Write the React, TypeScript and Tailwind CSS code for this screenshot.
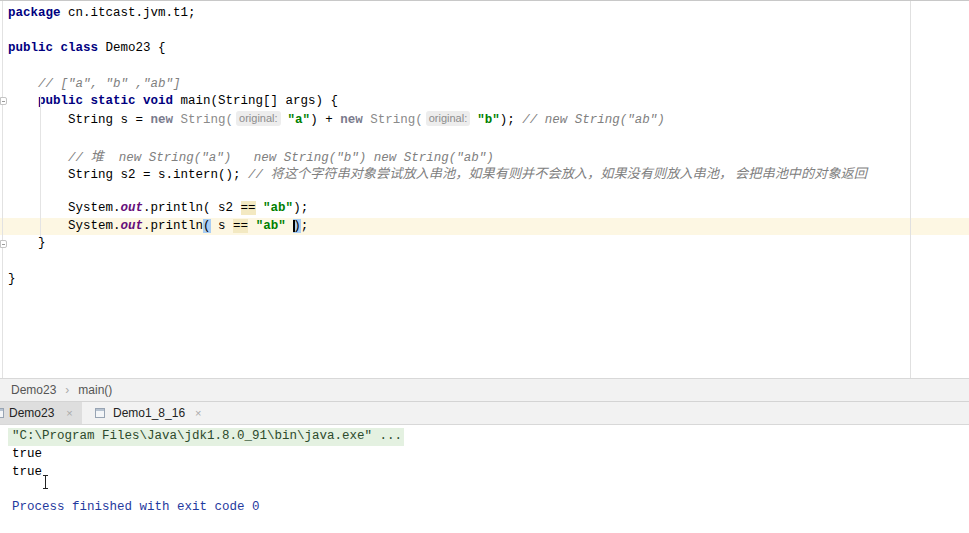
import React from "react";

const MONO = '"Liberation Mono", "DejaVu Sans Mono", monospace';
const CJK = '"Noto Sans CJK SC", sans-serif';

const K = ({ children }: { children: React.ReactNode }) => (
  <span className="font-bold text-[#000080]">{children}</span>
);
const S = ({ children }: { children: React.ReactNode }) => (
  <span className="font-bold text-[#008000]">{children}</span>
);
const C = ({ children }: { children: React.ReactNode }) => (
  <span className="italic text-[#808080]">{children}</span>
);
const Dim = ({ children, bold }: { children: React.ReactNode; bold?: boolean }) => (
  <span className={bold ? "font-bold text-[#7a7a8c]" : "text-[#8a8a8a]"}>{children}</span>
);
const Out = () => <span className="italic font-bold text-[#660e7a]">out</span>;
const Eq = () => <span className="bg-[#f3e9c2]">==</span>;
const Inlay = () => (
  <span
    className="inline-block ml-[3px] mr-[7px] px-[3px] rounded-[3px] bg-[#ededed] text-[#8c8c8c] text-[11px] leading-[15px] align-[1px]"
    style={{ fontFamily: '"Liberation Sans", Arial, sans-serif' }}
  >
    original:
  </span>
);
const Cn = ({ children }: { children: React.ReactNode }) => (
  <span className="text-[13.2px]" style={{ fontFamily: CJK }}>
    {children}
  </span>
);

const Line = ({ children, current }: { children?: React.ReactNode; current?: boolean }) => (
  <div className={"h-[17.75px] leading-[17.75px] whitespace-pre pl-[8px] " + (current ? "bg-[#fdf7e3]" : "")}>
    {children}
  </div>
);

const TabIcon = () => (
  <svg width="10" height="10" viewBox="0 0 10 10" className="shrink-0">
    <rect x="0.5" y="0.5" width="9" height="9" fill="#f4f6f8" stroke="#98a4b3" />
    <rect x="1" y="1" width="8" height="2" fill="#b7c3d1" />
  </svg>
);

export default function App() {
  return (
    <div className="w-[969px] h-[533px] flex flex-col bg-white overflow-hidden" style={{ fontFamily: MONO }}>
      {/* Editor */}
      <div className="relative h-[378px] border-t border-[#c8c8c8] text-[12.5px] text-black overflow-hidden">
        {/* gutter line */}
        <div className="absolute left-[2px] top-0 bottom-0 w-px bg-[#e2e2e2]" />
        {/* right margin */}
        <div className="absolute left-[910px] top-0 bottom-0 w-px bg-[#e0e0e0] z-10" />
        <div className="pt-[3.5px]">
          <Line>
            <K>package</K> cn.itcast.jvm.t1;
          </Line>
          <Line />
          <Line>
            <K>public class</K> Demo23 {"{"}
          </Line>
          <Line />
          <Line>
            {"    "}
            <C>// ["a", "b" ,"ab"]</C>
          </Line>
          <Line>
            {"    "}
            <K>public static void</K> main(String[] args) {"{"}
          </Line>
          <Line>
            {"        String s = "}
            <Dim bold>new</Dim> <Dim>String(</Dim>
            <Inlay />
            <S>"a"</S>) + <Dim bold>new</Dim> <Dim>String(</Dim>
            <Inlay />
            <S>"b"</S>); <C>// new String("ab")</C>
          </Line>
          <Line />
          <Line>
            {"        "}
            <C>
              // <Cn>堆</Cn>  new String("a")   new String("b") new String("ab")
            </C>
          </Line>
          <Line>
            {"        String s2 = s.intern(); "}
            <C>
              // <Cn>将这个字符串对象尝试放入串池，如果有则并不会放入，如果没有则放入串池， 会把串池中的对象返回</Cn>
            </C>
          </Line>
          <Line />
          <Line>
            {"        System."}
            <Out />
            .println( s2 <Eq /> <S>"ab"</S>);
          </Line>
          <Line current>
            {"        System."}
            <Out />
            .println<span className="bg-[#a9cdf3]">(</span> s <Eq /> <S>"ab"</S>{" "}
            <span className="relative bg-[#a9cdf3]">
              <span className="absolute left-0 top-[1px] bottom-[1px] w-[2px] bg-black" />)
            </span>
            ;
          </Line>
          <Line>{"    }"}</Line>
          <Line />
          <Line>{"}"}</Line>
        </div>
        {/* indent guide */}
        <div className="absolute left-[40px] top-[94px] h-[142px] w-px bg-[#e4e4e4]" />
        {/* fold markers */}
        <div className="absolute left-[0px] top-[96px] w-[7px] h-[8px] border border-[#c4c4c4] bg-white rounded-r-[2px] flex items-center justify-center">
          <div className="w-[3px] h-px bg-[#9a9a9a]" />
        </div>
        <div className="absolute left-[0px] top-[239px] w-[7px] h-[8px] border border-[#c4c4c4] bg-white rounded-r-[2px] flex items-center justify-center">
          <div className="w-[3px] h-px bg-[#9a9a9a]" />
        </div>
      </div>

      {/* Breadcrumb */}
      <div
        className="h-[23px] shrink-0 border-t border-[#d8d8d8] bg-[#f2f2f2] flex items-center pl-[11px] text-[12px] text-[#555]"
        style={{ fontFamily: '"Liberation Sans", Arial, sans-serif' }}
      >
        <span>Demo23</span>
        <span className="mx-[9px] text-[#aaa]">›</span>
        <span>main()</span>
      </div>

      {/* Tabs */}
      <div
        className="h-[23px] shrink-0 border-t border-[#d4d4d4] bg-[#f2f2f2] flex items-stretch text-[12px] text-[#222]"
        style={{ fontFamily: '"Liberation Sans", Arial, sans-serif' }}
      >
        <div className="w-[82px] bg-[#dedede] flex items-center gap-[4px] pl-0">
          <div className="-ml-[6px]">
            <TabIcon />
          </div>
          <span className="ml-[1px]">Demo23</span>
          <span className="ml-[8px] text-[#aaa] text-[11px]">×</span>
        </div>
        <div className="flex items-center pl-[13px]">
          <TabIcon />
          <span className="ml-[8px]">Demo1_8_16</span>
          <span className="ml-[10px] text-[#aaa] text-[11px]">×</span>
        </div>
      </div>

      {/* Console */}
      <div className="relative flex-1 border-t border-[#d8d8d8] bg-white text-[12.5px] pt-[3px]">
        <div className="h-[17.75px] leading-[17.75px] whitespace-pre pl-[8px]">
          <span className="inline-block bg-[#e4f1e1] pl-[4px] pr-[2px] text-[#2c4a2c]">
            "C:\Program Files\Java\jdk1.8.0_91\bin\java.exe" ...
          </span>
        </div>
        <div className="h-[17.75px] leading-[17.75px] whitespace-pre pl-[12px] text-black">true</div>
        <div className="h-[17.75px] leading-[17.75px] whitespace-pre pl-[12px] text-black">true</div>
        <div className="h-[17.75px]" />
        <div className="h-[17.75px] leading-[17.75px] whitespace-pre pl-[12px] text-[#1f3a9e]">
          Process finished with exit code 0
        </div>
        {/* mouse I-beam */}
        <svg className="absolute left-[42px] top-[50px]" width="7" height="14" viewBox="0 0 7 14">
          <path d="M1 0.5h5M3.5 0.5v13M1 13.5h5" stroke="#222" strokeWidth="1" fill="none" />
        </svg>
      </div>
    </div>
  );
}
